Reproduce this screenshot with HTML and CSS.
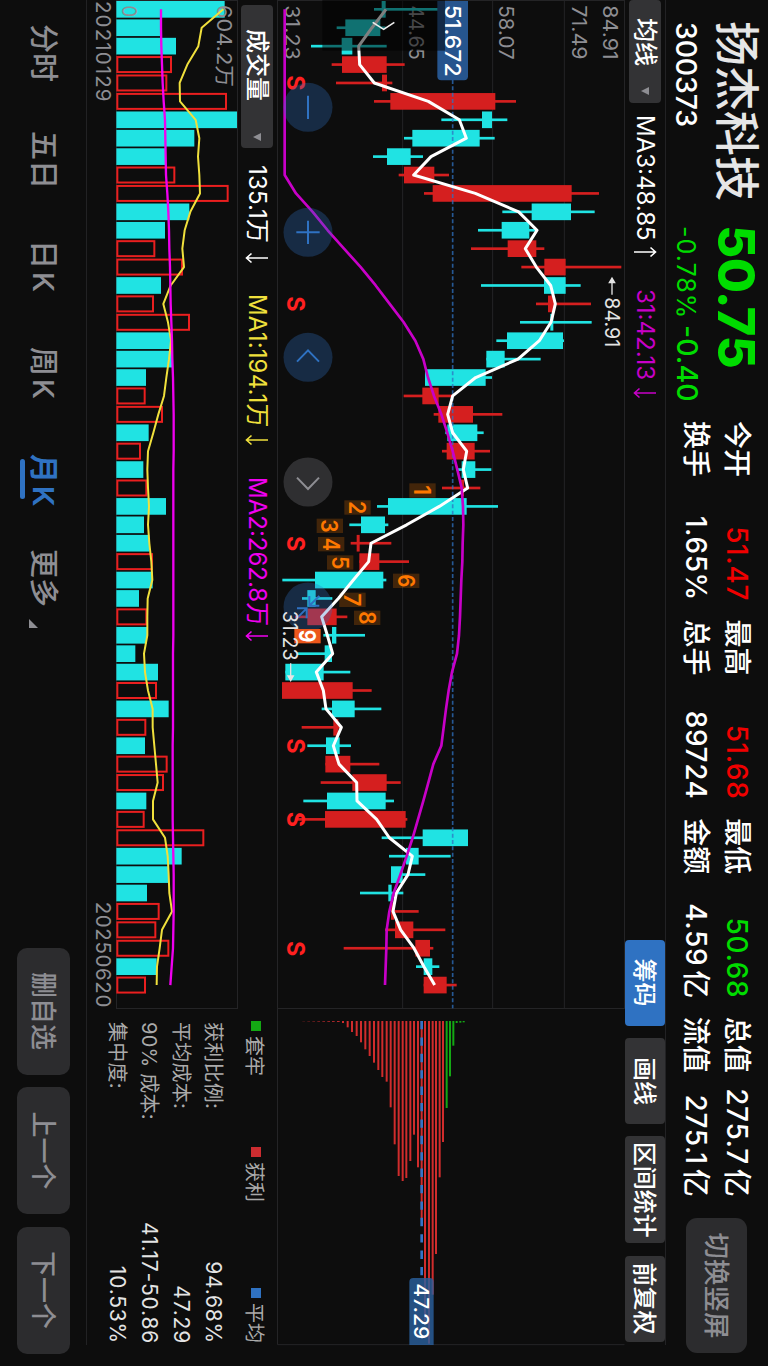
FILE: index.html
```html
<!DOCTYPE html>
<html lang="zh-CN">
<head>
<meta charset="utf-8">
<title>扬杰科技 300373</title>
<link rel="stylesheet" href="styles.css">
</head>
<body>
<div class="viewport">
<main class="screen">
  <header class="header">
    <div class="stock"><div class="stock-name">扬杰科技</div><div class="stock-code">300373</div></div>
    <div class="quote"><div class="price">50.75</div><div class="change"><span class="pct">-0.78%</span><span class="diff">-0.40</span></div></div>
    <div class="stats">
      <div class="stat"><span>今开</span><b class="up">51.47</b></div>
      <div class="stat"><span>最高</span><b class="up">51.68</b></div>
      <div class="stat"><span>最低</span><b class="down">50.68</b></div>
      <div class="stat"><span>总值</span><b>275.7<em>亿</em></b></div>
      <div class="stat"><span>换手</span><b>1.65%</b></div>
      <div class="stat"><span>总手</span><b>89724</b></div>
      <div class="stat"><span>金额</span><b>4.59<em>亿</em></b></div>
      <div class="stat"><span>流值</span><b>275.1<em>亿</em></b></div>
    </div>
    <button class="btn btn-rotate">切换竖屏</button>
  </header>

  <section class="toolbar">
    <button class="picker picker-ma">均线<i class="caret"></i></button>
    <span class="ind ind-ma3">MA3:48.85</span><svg class="arrow white" viewBox="0 0 12 24"><path d="M6 23V1.5M1.5 6.5L6 1.5L10.5 6.5"/></svg>
    <span class="ind ind-31">31:42.13</span><svg class="arrow purple" viewBox="0 0 12 24"><path d="M6 1V22.5M1.5 17.5L6 22.5L10.5 17.5"/></svg>
    <div class="tools">
      <button class="tool active">筹码</button>
      <button class="tool">画线</button>
      <button class="tool wide">区间统计</button>
      <button class="tool">前复权</button>
    </div>
  </section>

  <svg class="price-chart" id="price" viewBox="0 0 4038 1044"></svg>

  <section class="lower">
    <div class="volume">
      <div class="volume-bar">
        <button class="picker picker-vol">成交量<i class="caret"></i></button>
        <span class="ind ind-vol">135.1万</span><svg class="arrow white" viewBox="0 0 12 24"><path d="M6 1V22.5M1.5 17.5L6 22.5L10.5 17.5"/></svg>
        <span class="ind ind-ma1">MA1:194.1万</span><svg class="arrow yellow" viewBox="0 0 12 24"><path d="M6 1V22.5M1.5 17.5L6 22.5L10.5 17.5"/></svg>
        <span class="ind ind-ma2">MA2:262.8万</span><svg class="arrow magenta" viewBox="0 0 12 24"><path d="M6 1V22.5M1.5 17.5L6 22.5L10.5 17.5"/></svg>
      </div>
      <svg class="volume-chart" id="volume" viewBox="0 0 3027 366"></svg>
      <div class="dates"><span class="d1">20210129</span><span class="d2">20250620</span></div>
    </div>
    <aside class="chips">
      <div class="legend">
        <span><i class="sq green"></i>套牢</span><span><i class="sq red"></i>获利</span><span><i class="sq blue"></i>平均</span>
      </div>
      <dl class="facts">
        <div><dt>获利比例:</dt><dd>94.68%</dd></div>
        <div><dt>平均成本:</dt><dd>47.29</dd></div>
        <div><dt>90% 成本:</dt><dd>41.17-50.86</dd></div>
        <div><dt>集中度:</dt><dd>10.53%</dd></div>
      </dl>
    </aside>
  </section>

  <footer class="footer">
    <nav class="tabs">
      <a class="tab">分时</a><a class="tab">五日</a><a class="tab k">日K</a><a class="tab k">周K</a><a class="tab k current">月K</a><a class="tab more">更多</a>
    </nav>
    <div class="actions"><button class="btn">删自选</button><button class="btn">上一个</button><button class="btn">下一个</button></div>
  </footer>
</main>
</div>
<script src="chart.js"></script>
</body>
</html>
```

FILE: styles.css
```css
* { box-sizing: border-box; }
body { margin: 0; background: #fff; }
.viewport { width: 768px; height: 1367px; overflow: hidden; }
.screen {
  width: 1366px; height: 768px; background: #0d0d0d; color: #fff;
  font-family: Inter, "Noto Sans CJK SC", sans-serif;
  transform-origin: 0 0; transform: translateX(768px) rotate(90deg);
  display: flex; flex-direction: column; overflow: hidden;
}
button { font-family: inherit; border: 0; padding: 0; margin: 0; white-space: nowrap; }
svg { display: block; flex: none; }
svg text { font-family: Inter, "Noto Sans CJK SC", sans-serif; }

.header { height: 103px; display: flex; padding: 6px 0 0 21px; flex: none; position: relative; }
.header::after { content: ""; position: absolute; left: 0; width: 1345px; bottom: 0; height: 1px; background: #222224; }
.stock { width: 204px; }
.stock-name { font-size: 45px; line-height: 51px; font-weight: 500; color: #e6e6e6; white-space: nowrap; }
.stock-code { font-size: 28.5px; line-height: 36px; letter-spacing: -.2px; font-weight: 500; margin: 7px 0 0 1px; }
.quote { width: 196px; color: #00dc00; white-space: nowrap; }
.price { font-size: 51px; line-height: 51px; font-weight: 800; letter-spacing: -.6px; }
.change { display: flex; align-items: baseline; line-height: 36px; margin: 6px 0 0 1px; font-weight: 500; }
.pct { font-size: 25px; width: 99px; font-weight: 400; letter-spacing: 1px; }
.diff { font-size: 28.5px; }
.stats { width: 776px; display: grid; grid-template-columns: repeat(4, 180px); column-gap: 18.6px; grid-template-rows: 41px 41px; padding-top: 5px; }
.stat { display: flex; justify-content: space-between; align-items: center; white-space: nowrap; font-size: 28px; line-height: 41px; font-weight: 500; }
.stat b { font-weight: 500; letter-spacing: .6px; }
.stat em { font-style: normal; margin-left: 4px; letter-spacing: 0; }
.up { color: #f00000; }
.down { color: #00dc00; }
.btn { background: #2c2c2e; color: #8e8e93; border-radius: 10px; height: 53px; width: 127px; font-size: 26px; font-weight: 500; padding-bottom: 4px; }
.btn-rotate { width: 135px; height: 61px; margin: 15px 0 0 21px; font-size: 26.5px; border-radius: 11px; padding-bottom: 5px; }

.toolbar { height: 40px; display: flex; align-items: center; flex: none; }
.picker { background: #333335; color: #fff; height: 32px; border-radius: 4px; font-size: 24px; line-height: 32px; font-weight: 500; display: flex; align-items: center; flex: none; }
.picker-ma { width: 103px; padding-left: 18px; }
.picker-vol { width: 143px; padding-left: 24px; }
.caret { border: 4.5px solid transparent; border-top: 8px solid #8e8e93; border-bottom: 0; margin-left: 21px; }
.picker-vol .caret { margin-left: 32px; }
.ind { font-size: 24px; line-height: 32px; white-space: nowrap; flex: none; }
.ind-ma3 { width: 131px; margin-left: 12px; }
.ind-31 { width: 98px; margin-left: 31px; color: #c800c8; }
.ind-vol { width: 87px; margin-left: 17px; letter-spacing: .15px; }
.ind-ma1 { width: 140px; margin-left: 30px; color: #f0e03c; letter-spacing: .15px; }
.ind-ma2 { width: 153px; margin-left: 31px; color: #f000f0; }
.arrow { width: 12px; height: 24px; fill: none; stroke-width: 1.6; stroke: currentColor; }
.purple { color: #c800c8; }
.yellow { color: #f0e03c; }
.magenta { color: #f000f0; }
.tools { margin-left: auto; margin-right: 24.5px; display: flex; gap: 12.3px; }
.tool { width: 86px; height: 40px; background: #333335; color: #fff; border-radius: 4px; font-size: 24px; font-weight: 500; padding-bottom: 4px; }
.tool.active { background: #2f72c2; }
.tool.wide { width: 107px; }

.price-chart { width: 1346px; height: 348px; }
.lower { height: 191px; display: flex; flex: none; position: relative; }
.lower::after { content: ""; position: absolute; left: 0; width: 1345px; bottom: 0; height: 1px; background: #222224; }
.volume { width: 1009px; flex: none; }
.volume-bar { height: 39px; display: flex; align-items: center; padding-left: 5px; }
.volume-chart { width: 1009px; height: 122px; }
.dates { display: flex; justify-content: space-between; font-size: 20.5px; line-height: 26px; color: #8e8e93; padding: 0 1px; }
.d1 { letter-spacing: 1.1px; }
.d2 { letter-spacing: .6px; }
.chips { width: 323px; margin-left: 12px; }
.legend { display: flex; height: 42px; align-items: center; font-size: 20px; color: #aaa; }
.legend span { display: flex; align-items: center; white-space: nowrap; width: 126px; }
.legend span + span { width: 141px; }
.legend span:last-child { width: auto; }
.sq { width: 10px; height: 10px; margin-right: 5px; position: relative; }
.green { background: #14a814; }
.red { background: #cc2c30; }
.blue { background: #2f72c2; }
.facts { margin: 6px 0 0; }
.facts div { display: flex; justify-content: space-between; align-items: center; height: 32px; font-size: 20px; line-height: 32px; white-space: nowrap; letter-spacing: .25px; padding-left: 1px; }
.facts dt { color: #aaa; }
.facts dd { margin: 0; color: #e4e4e4; font-size: 21px; letter-spacing: .8px; }

.footer { flex: 1; display: flex; justify-content: space-between; align-items: center; padding: 0 12.5px 2px 24px; }
.tabs { display: flex; color: #8e8e93; font-size: 29px; font-weight: 500; line-height: 44px; }
.tab { display: block; width: 107px; position: relative; white-space: nowrap; top: 1px; }
.k { letter-spacing: 3px; padding-left: 2px; }
.current { color: #2f72c2; font-weight: 600; width: 97px; }
.current::after { content: ""; position: absolute; left: 7px; bottom: -1px; width: 40px; height: 5px; border-radius: 3px; background: #2f72c2; }
.more::after { content: ""; position: absolute; left: 70px; bottom: 8px; border-left: 9px solid transparent; border-bottom: 9px solid #8e8e93; }
.actions { display: flex; gap: 12.5px; }
```

FILE: chart.js
```js
// Drawing units are three per pixel; values are measured upwards.
const RED = '#d51f1f', CYAN = '#20e3e3', LINE = '#242426', BLUE = '#2f72c2';
const STEP = 55.23, FIRST = 28;
const cx = i => FIRST + STEP * i;

// low, body bottom, body top, high, direction
const candles = [
[312,335,347,575,0],[200,226,331,347,0],[123,215,247,350,0],[185,216,350,404,1],[198,336,351,367,1],[312,361,676,738,1],
[514,636,666,712,0],[402,427,629,674,0],[309,351,422,459,0],[386,402,493,537,1],[462,488,905,987,1],[697,785,903,974,0],
[624,695,778,795,0],[603,713,799,823,1],[754,823,887,1054,1],[633,822,887,932,0],[798,834,853,963,1],[750,841,850,965,0],
[679,711,879,882,0],[649,649,704,812,0],[465,465,647,666,0],[401,457,506,546,1],[491,505,609,697,1],[526,532,622,641,0],
[516,530,614,660,1],[560,575,616,664,0],[516,573,582,631,1],[321,354,590,684,0],[238,273,345,355,0],[242,260,269,364,1],
[268,268,328,417,1],[37,135,340,349,0],[96,112,137,187,0],[75,112,200,232,1],[160,186,199,285,0],[80,164,186,190,0],
[46,46,161,241,0],[36,36,248,305,1],[155,186,254,334,0],[95,190,205,213,1],[112,168,209,243,0],[166,166,241,328,1],
[152,247,350,392,1],[100,171,347,372,0],[80,165,407,412,1],[335,458,594,594,0],[357,408,446,542,0],[363,363,398,466,0],
[270,355,365,400,0],[363,363,372,446,1],[345,375,430,526,1],[221,436,480,490,1],[438,461,487,508,0],[461,461,530,560,1]];
const ma3 = [348,306,266,269,313,475,568,589,483,431,616,746,801,766,799,842,856,843,808,744,617,548,533,548,590,580,593,508,410,303,296,250,205,155,172,188,139,160,168,214,190,207,260,261,320,358,427,414,379,369,392,432,462,494];
const ma31 = [44,44,44,44,44,44,44,44,44,44,78,128,173,222,272,317,359,401,436,460,474,492,514,532,548,562,575,579,580,578,577,574,572,570,567,561,546,536,528,521,514,490,475,460,444,428,410,391,371,358,350,349,347,345];

const volumes = [434,242,288,275,261,440,471,343,256,285,445,328,255,225,308,243,221,329,271,276,198,196,248,206,182,190,201,258,192,208,218,218,177,201,201,166,234,230,266,198,195,262,251,199,193,372,305,266,201,238,228,267,230,197];
const risingVolumes = new Set([3,4,5,9,10,13,14,16,17,21,22,24,26,30,33,37,39,41,42,44,45,49,50,51,53]);
const vma1 = [430,365,355,322,299,300,347,358,354,358,360,331,314,307,312,272,250,264,273,267,259,252,235,220,204,202,204,207,204,208,214,217,203,202,202,192,195,204,218,218,223,228,233,219,219,255,263,266,268,276,246,239,231,230];
const vma2 = [243,243,244,246,248,251,255,256,257,258,262,265,267,268,270,271,272,274,276,277,279,280,281,281,281,280,280,280,280,280,280,280,280,280,280,279,279,279,279,279,278,278,278,278,278,279,280,281,281,281,280,279,275,271];

// position, end of bar
const chipBars = [[219,69],[233,82],[246,96],[260,108],[273,127],[286,148],[299,168],[312,188],[325,210],[337,231],[350,245],[362,322],[374,433],[386,528],[398,543],[409,534],[421,483],[432,404],[444,502],[455,655],[465,965],[477,1031],[488,884],[498,762],[509,532],[519,426],[530,324],[540,229],[550,137],[560,69],[571,68],[581,67]];

const rect = (x, y, w, h, fill, extra = '') => `<rect x="${x}" y="${y}" width="${w}" height="${h}" fill="${fill}" ${extra}/>`;
const seg = (x1, y1, x2, y2, c, w, extra = '') => `<line x1="${x1}" y1="${y1}" x2="${x2}" y2="${y2}" stroke="${c}" stroke-width="${w}" ${extra}/>`;
const text = (x, y, s, len, size, fill, weight = 400) => `<text x="${x}" y="${y}" textLength="${len}" lengthAdjust="spacingAndGlyphs" font-size="${size}" font-weight="${weight}" fill="${fill}">${s}</text>`;
const poly = (vals, f, c, w) => `<polyline fill="none" stroke="${c}" stroke-width="${w}" stroke-linejoin="round" points="${vals.map((v, i) => cx(i).toFixed(1) + ',' + f(v)).join(' ')}"/>`;

function drawPrice() {
  const Y = v => 1065 - v;
  let s = '';
  [398, 668, 883].forEach(v => s += seg(0, Y(v), 3025, Y(v), LINE, 3));
  s += rect(1.5, 1.5, 3024, 1041, 'none', `stroke="${LINE}" stroke-width="3"`);
  s += `<path d="M3025 1042.5H4034V1.5" fill="none" stroke="${LINE}" stroke-width="3"/>`;
  [['84.91',1000],['71.49',905],['58.07',688],['44.65',416],['31.23',46]].forEach(([t, v]) => s += text(16, Y(v), t, 163, 61, '#8e8e93'));
  candles.forEach(([lo, b, t, hi, up], i) => {
    const c = up ? RED : CYAN;
    s += rect(cx(i) - 4, Y(hi), 8, hi - lo, c) + rect(cx(i) - 25, Y(t), 50, t - b, c);
  });
  s += seg(240, Y(548), 3025, Y(548), '#2f72c2', 5, 'stroke-dasharray="12 7" opacity=".75"');
  [249, 912, 1631, 2238, 2458, 2846].forEach(x => s += text(x - 23, Y(51), 'S', 46, 73, '#ff2020', 700));
  [['1',418,1472],['2',223,1523],['3',140,1578],['4',144,1633],['5',171,1688],['6',369,1743],['7',208,1800],['8',252,1854]]
    .forEach(([n, v, x]) => s += rect(x - 22, Y(v + 79), 43, 79, '#ff7a00', 'opacity=".22"') + text(x - (n === '1' ? 16 : 20), Y(v + 14), n, n === '1' ? 30 : 40, 68, '#ff7800', 600));
  s += poly(ma3, Y, '#fff', 9) + poly(ma31, Y, '#c800c8', 8);
  // zoom and pan controls
  const round = (x, c, o) => `<circle cx="${x}" cy="${Y(114)}" r="73.5" fill="${c}" fill-opacity="${o}"/>`;
  const ic = (d, c) => `<path d="${d}" fill="none" stroke="${c}" stroke-width="6"/>`;
  s += round(322, BLUE, .3) + ic('M287 951H357', BLUE);
  s += round(697, BLUE, .3) + ic('M662 951H732M697 916V986', BLUE);
  s += round(1072, BLUE, .3) + ic('M1085 984L1051 951L1085 918', BLUE);
  s += round(1446, '#333335', .9) + ic('M1433 984L1467 951L1433 918', '#8e8e93');
  s += round(1821, BLUE, .3) + ic('M1788 947H1817V917M1817 947L1788 917M1825 984V955H1855M1825 955L1855 985', BLUE);
  s += rect(1887, Y(152), 43, 79, '#ec571c') + text(1889, Y(87), '9', 38, 68, '#fff', 700);
  // extreme prices
  s += text(892, Y(1004), '84.91', 150, 61, '#e4e4e4') + `<path d="M836 ${Y(1026)}H884M848 ${Y(1034)}L834 ${Y(1026)}L848 ${Y(1018)}Z" fill="#e4e4e4" stroke="#e4e4e4" stroke-width="4"/>`;
  s += text(1832, Y(40), '31.23', 150, 61, '#e4e4e4') + `<path d="M1990 ${Y(62)}H2038M2028 ${Y(70)}L2042 ${Y(62)}L2028 ${Y(54)}Z" fill="#e4e4e4" stroke="#e4e4e4" stroke-width="4"/>`;
  // crosshair price and drawer handle
  s += `<path d="M3 ${Y(594)}H229Q241 ${Y(594)} 241 ${Y(582)}V${Y(514)}Q241 ${Y(502)} 229 ${Y(502)}H3Z" fill="#26558e"/>`;
  s += text(14, Y(524), '51.672', 216, 66, '#fff', 500);
  s += rect(0, Y(525), 152, 368, '#000', 'opacity=".5"') + `<path d="M67 ${Y(308)}L88 ${Y(341)}L67 ${Y(373)}" fill="none" stroke="#eee" stroke-width="5"/>`;
  // cost distribution
  [101,116,131,146,161,176,190,205].forEach((v, i) => s += rect(3063, Y(v) - 4, 3, 8, '#cc2c30', `opacity="${(.2 + i * .1).toFixed(1)}"`));
  chipBars.forEach(([v, e]) => s += rect(3063, Y(v) - 3, e - 63, 6, v > 525 ? '#14a814' : '#d02c2c'));
  s += seg(3063, Y(455), 3827, Y(455), '#3474c8', 8, 'stroke-dasharray="25 24.2"');
  s += `<path d="M4035 ${Y(491)}H3846Q3834 ${Y(491)} 3834 ${Y(479)}V${Y(430)}Q3834 ${Y(418)} 3846 ${Y(418)}H4035Z" fill="#2a5f9c" opacity=".82"/>`;
  s += text(3850, Y(432), '47.29', 168, 62, '#fff', 500);
  document.getElementById('price').innerHTML = s;
}

function drawVolume() {
  const Y = v => 474 - v;
  let s = rect(1.5, 1.5, 3024, 363, 'none', `stroke="${LINE}" stroke-width="3"`);
  volumes.forEach((v, i) => {
    s += risingVolumes.has(i)
      ? rect(cx(i) - 22.5, Y(v - 2), 45, v - 114, 'none', 'stroke="#ea1f1f" stroke-width="6"')
      : rect(cx(i) - 25, Y(v), 50, v - 109, CYAN);
  });
  s += text(15, Y(412), '604.2万', 246, 61, '#8e8e93') + text(16, Y(125), '0', 36, 61, '#8e8e93');
  s += poly(vma1, Y, '#f0e03c', 6) + poly(vma2, Y, '#f000f0', 7);
  document.getElementById('volume').innerHTML = s;
}

drawPrice();
drawVolume();
```
